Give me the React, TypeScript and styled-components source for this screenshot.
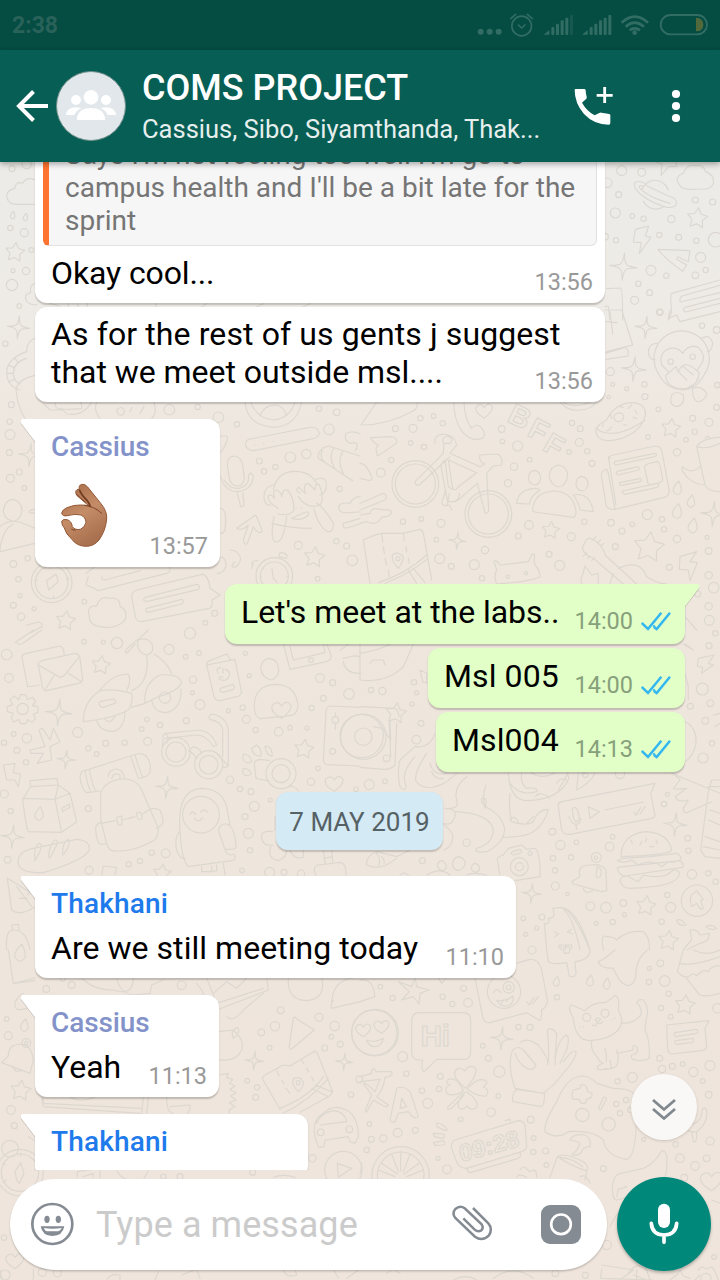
import React from "react";
import styled, { createGlobalStyle } from "styled-components";

const GlobalStyle = createGlobalStyle`
  * { box-sizing: border-box; }
  html, body { margin: 0; padding: 0; }
  body { font-family: Roboto, "Liberation Sans", sans-serif; background: #efe6dd; }
`;

const Screen = styled.div`
  position: relative;
  display: flex;
  flex-direction: column;
  width: 720px;
  height: 1280px;
  overflow: hidden;
  background: linear-gradient(180deg, #ecebe7 0, #ecebe7 170px, #eeebe6 300px, #efe6dd 470px, #eee5dc 900px, #efe5dc 1280px);
`;

const Wallpaper = styled.svg`
  position: absolute;
  inset: 0;
  width: 720px;
  height: 1280px;
  fill: none;
  stroke: #dcd8d1;
  stroke-width: 3.5;
  stroke-linejoin: round;
  stroke-linecap: round;
`;

const StatusBar = styled.div`
  position: relative;
  z-index: 2;
  display: flex;
  justify-content: space-between;
  flex: none;
  height: 50px;
  padding-left: 12px;
  background: #054c43;
`;

const Clock = styled.span`
  font-size: 23px;
  font-weight: 700;
  line-height: 52px;
  color: #296259;
`;

const Header = styled.header`
  position: relative;
  z-index: 2;
  display: flex;
  align-items: center;
  flex: none;
  height: 112px;
  padding-left: 16px;
  background: #075e54;
  box-shadow: 0 2px 6px rgba(0, 0, 0, 0.35);
`;

const Avatar = styled.div`
  width: 70px;
  height: 70px;
  margin-left: 8px;
  border-radius: 50%;
  border: 1px solid #6f8f8b;
  background: #e1e7ea;
  svg { display: block; }
`;

const Heading = styled.div`
  width: 432px;
  margin-left: 16px;
  white-space: nowrap;
`;

const Title = styled.div`
  font-size: 36px;
  font-weight: 500;
  line-height: 42px;
  color: #fff;
`;

const Subtitle = styled.div`
  margin-top: 4px;
  font-size: 25.5px;
  line-height: 32px;
  color: #e6efee;
`;

const HeaderIcons = styled.div`
  display: flex;
  align-items: center;
  gap: 56px;
`;

const Chat = styled.main`
  position: relative;
  display: flex;
  flex-direction: column;
  flex: none;
  height: 1008px;
  padding: 0 35px;
  overflow: hidden;
`;

const Bubble = styled.section<{ $w: number; $gap: number; $sent?: boolean; $tail?: boolean }>`
  position: relative;
  flex: none;
  align-self: ${(p) => (p.$sent ? "flex-end" : "flex-start")};
  width: ${(p) => p.$w}px;
  margin-top: ${(p) => p.$gap}px;
  border-radius: 12px;
  border-top-left-radius: ${(p) => (p.$tail && !p.$sent ? 0 : 12)}px;
  border-top-right-radius: ${(p) => (p.$tail && p.$sent ? 0 : 12)}px;
  background: ${(p) => (p.$sent ? "#e1ffc7" : "#fff")};
  box-shadow: 0 1.5px 1.5px rgba(0, 0, 0, 0.2);
`;

const TailShape = styled.svg<{ $sent?: boolean }>`
  position: absolute;
  top: 0;
  ${(p) => (p.$sent ? "right: -15px; transform: scaleX(-1);" : "left: -15px;")}
  filter: drop-shadow(0 1px 0.6px rgba(0, 0, 0, 0.2));
`;

const Sender = styled.div<{ $color: string; $track: number }>`
  padding: 11px 16px 0;
  font-size: 28px;
  font-weight: 500;
  line-height: 33px;
  letter-spacing: ${(p) => p.$track}px;
  color: ${(p) => p.$color};
`;

const Line = styled.div<{ $sent?: boolean; $top?: number }>`
  display: flex;
  align-items: flex-end;
  padding: ${(p) => p.$top ?? 8}px ${(p) => (p.$sent ? 14 : 12)}px ${(p) => (p.$sent ? 9 : 7)}px 16px;
`;

const Body = styled.div`
  flex: 1 1 0;
  min-width: 0;
  padding-bottom: 4px;
  font-size: 32px;
  line-height: 38px;
  color: #000;
  white-space: pre;
`;

const TextRow = styled.div<{ $track: number }>`
  letter-spacing: ${(p) => p.$track}px;
`;

const Meta = styled.div<{ $sent?: boolean }>`
  display: flex;
  align-items: center;
  gap: 8px;
  font-size: 23.5px;
  line-height: 28px;
  color: ${(p) => (p.$sent ? "#87a07b" : "#999")};
`;

const Emoji = styled.svg`
  display: block;
  width: 68px;
  height: 84px;
`;

const Quote = styled.blockquote`
  display: flex;
  align-items: flex-end;
  height: 108px;
  margin: 0 8px;
  padding: 0 0 8px 16px;
  border: 1px solid #e2e2e2;
  border-left: 6px solid #ff7430;
  border-radius: 6px;
  background: #f6f6f6;
  font-size: 28px;
  line-height: 33px;
  color: #757575;
  white-space: pre;
`;

const DateChip = styled.div`
  flex: none;
  align-self: center;
  width: 167px;
  height: 58px;
  margin: 20px 0 0 -1px;
  border-radius: 12px;
  background: #d4eaf4;
  box-shadow: 0 1.5px 1.5px rgba(0, 0, 0, 0.18);
  font-size: 26px;
  line-height: 60px;
  text-align: center;
  color: #566166;
  white-space: nowrap;
`;

const ScrollButton = styled.button`
  position: absolute;
  right: 23px;
  bottom: 30px;
  width: 66px;
  height: 66px;
  padding: 0;
  border: 0;
  border-radius: 50%;
  background: rgba(251, 250, 249, 0.92);
  box-shadow: 0 1px 3px rgba(0, 0, 0, 0.16);
  svg { display: block; }
`;

const Footer = styled.footer`
  position: relative;
  display: flex;
  align-items: center;
  flex: none;
  height: 110px;
  padding: 0 9px 2px 10px;
  gap: 10px;
`;

const InputBar = styled.div`
  display: flex;
  align-items: center;
  width: 597px;
  height: 91px;
  padding-left: 20px;
  border-radius: 46px;
  background: #fff;
  box-shadow: 0 1.5px 2px rgba(0, 0, 0, 0.2);
  svg { flex: none; }
`;

const Placeholder = styled.span`
  width: 355px;
  margin-left: 22px;
  padding-top: 2px;
  font-size: 36px;
  line-height: 44px;
  letter-spacing: 0.08px;
  color: #cbcbcb;
  white-space: nowrap;
`;

const Attachments = styled.div`
  display: flex;
  align-items: center;
  gap: 46px;
`;

const MicButton = styled.button`
  width: 94px;
  height: 94px;
  padding: 0;
  border: 0;
  border-radius: 50%;
  background: #00897b;
  box-shadow: 0 2px 3px rgba(0, 0, 0, 0.25);
  svg { display: block; }
`;

/* ---------- wallpaper primitives ---------- */

type N3 = [number, number, number];

const polar = (x: number, y: number, r: number, a: number) =>
  `${(x + r * Math.cos(a)).toFixed(1)} ${(y + r * Math.sin(a)).toFixed(1)}`;

const starPath = ([x, y, r]: N3) =>
  "M" +
  Array.from({ length: 10 }, (_, i) =>
    polar(x, y, i % 2 ? r * 0.52 : r, -1.45 + (i * Math.PI) / 5)
  ).join("L") +
  "Z";

const sparkPath = ([x, y, r]: N3) =>
  Array.from({ length: 4 }, (_, i) => {
    const a = -1.48 + (i * Math.PI) / 2;
    return `${i ? "" : "M" + polar(x, y, r, a)}Q${polar(x, y, r * 0.2, a + 0.4)} ${polar(x, y, r * 0.32, a + Math.PI / 4)}Q${polar(x, y, r * 0.2, a + 1.17)} ${polar(x, y, r, a + Math.PI / 2)}`;
  }).join("") + "Z";

const dropPath = ([x, y, r]: N3) =>
  `M${x + r * 0.2} ${y - r}Q${x - r * 0.8} ${y} ${x - r * 0.5} ${y + r * 0.5}Q${x} ${y + r * 1.2} ${x + r * 0.5} ${y + r * 0.5}Q${x + r * 0.7} ${y} ${x + r * 0.2} ${y - r}Z`;

const heartPath = ([x, y, r]: N3) =>
  `M${x} ${y + r}Q${x - r * 1.3} ${y + r * 0.3} ${x - r} ${y - r * 0.4}Q${x - r * 0.4} ${y - r} ${x} ${y - r * 0.3}Q${x + r * 0.5} ${y - r * 1.1} ${x + r} ${y - r * 0.4}Q${x + r * 1.1} ${y + r * 0.2} ${x} ${y + r}Z`;

interface PatchProps {
  x: number;
  y: number;
  dots: number[];
  stars?: N3[];
  sparks?: N3[];
  drops?: N3[];
  hearts?: N3[];
  rings?: N3[];
  d?: string;
  children?: React.ReactNode;
}

function Patch({ x, y, dots, stars = [], sparks = [], drops = [], hearts = [], rings = [], d = "", children }: PatchProps) {
  const circles: N3[] = [...rings];
  for (let i = 0; i < dots.length; i += 3) circles.push([dots[i], dots[i + 1], dots[i + 2]]);
  return (
    <g transform={`translate(${x} ${y}) scale(.33333)`}>
      {circles.map(([cx, cy, r], i) => (
        <circle key={i} cx={cx} cy={cy} r={r} />
      ))}
      <path d={[...stars.map(starPath), ...sparks.map(sparkPath), ...drops.map(dropPath), ...hearts.map(heartPath), d].join("")} />
      {children}
    </g>
  );
}

function Doodles() {
  return (
    <Wallpaper viewBox="0 0 720 1280">
      <Patch x={0} y={0}
        dots={[36,506,9,80,492,14,31,684,8,73,698,12,94,750,7,39,812,6,78,813,11,36,855,17,58,918,7]}
        stars={[[45,757,30]]} drops={[[38,646,12],[76,652,12]]}
        d="M105 540Q80 528 68 550Q48 542 44 566Q20 570 20 590Q24 614 52 613L105 613M110 850Q88 850 92 878Q72 882 78 900Q86 916 110 914M150 911L180 918M205 911V920M232 911L236 920M262 911V920M470 911L466 920M620 911L605 920M790 911L770 920M930 911L910 920" />
      <Patch x={360} y={0}
        dots={[785,512,15,845,517,12,742,548,14,776,584,9,1006,600,9,1058,606,9,766,639,15,817,648,7,851,656,8,934,657,11,898,705,8,956,712,9,1009,722,8,768,721,8,735,710,10,1067,719,22,1022,772,15,873,811,15,919,827,8,1006,826,10,1037,810,8,835,851,8,869,878,9,824,901,12,900,937,9]}
        stars={[[1012,655,32]]} sparks={[[790,800,41]]}
        d="M826 688L866 678L856 708L873 712L838 760L844 728L820 726ZM888 486L906 492L903 526L926 500L950 500L948 486M958 553Q940 532 970 520Q980 490 1008 497Q1030 492 1036 514Q1064 524 1060 550Q1054 566 1036 567L985 568Q962 566 958 553ZM845 570A42 42 0 0 1 925 570M850 604A42 42 0 0 0 908 622M826 546Q848 540 862 558L925 588Q948 592 950 610Q946 625 920 622Q850 600 826 565Q820 552 826 546ZM850 560Q838 552 838 562Q860 590 930 610M893 748L990 752L985 785L953 770L950 778L980 795L968 814Q920 780 893 748ZM1080 840L935 880Q930 884 935 935L925 960M1080 856L966 888Q955 896 962 906L1080 878M1080 895L975 922Q965 930 976 936L1080 910M740 866L782 864Q788 866 788 960M735 920L745 918L750 960" />
      <Patch x={0} y={310}
        dots={[16,101,8,34,284,9,29,335,8,30,374,15,28,428,9,58,486,9,31,505,12,73,534,7,83,745,8,40,762,10,55,808,8,60,857,6,40,886,9,63,920,11,102,896,6,253,875,7,508,299,16,593,291,8,655,322,16,711,343,8,957,296,8,1010,307,10,987,358,16,778,453,9,792,484,8,826,471,8,871,442,16,919,432,14,1019,537,8,895,706,12,1009,694,8,1040,708,9,1057,751,16,953,806,7,644,910,9,616,938,7]}
        sparks={[[55,52,34],[90,435,35]]} stars={[[943,742,32],[197,932,30]]}
        rings={[[155,817,61],[155,817,49],[823,798,55],[823,798,42]]}
        d="M105 85Q80 95 80 125M80 125Q20 145 20 190Q22 230 60 240M80 145Q42 155 40 190Q42 215 60 222M24 165L42 172M20 190H40M27 215L45 207M45 145L54 158M105 196Q60 205 48 235Q50 285 75 326M130 280L150 300H190L200 312Q250 320 275 276M165 278Q165 300 185 296Q190 300 245 296Q246 280 240 276M290 276Q280 300 300 326M350 300Q365 285 372 300Q376 320 355 314ZM390 305L396 292M420 310L432 290M462 276Q472 310 455 326
        M735 276Q740 345 820 352Q890 350 905 276M752 276Q770 325 820 330Q870 325 885 276M780 318Q790 285 830 285Q850 290 860 315M660 380Q690 370 680 395Q670 420 660 428M745 388L930 352Q955 350 958 370Q955 382 940 386L760 422Q738 420 736 402Q738 392 745 388ZM764 405h1M790 400h1M820 395h1M847 390h1M1080 438L985 408Q950 420 955 445L1058 512M970 412Q955 440 975 458M1000 416Q985 445 1004 474M1028 425Q1010 455 1030 490M1080 372Q1060 360 1038 370Q1030 390 1050 400Q1062 396 1070 400Q1075 412 1065 422
        M682 465Q680 440 704 438Q724 442 728 465L733 505Q730 528 710 528Q692 524 688 505ZM662 498Q672 545 715 545Q758 538 760 498Q750 480 745 500Q750 525 718 535Q690 538 672 510M712 550L722 590Q733 592 732 580L728 548
        M820 540Q830 485 885 484Q930 484 950 520M820 525Q790 530 792 565Q796 588 812 585M948 508Q985 495 978 535Q975 550 960 555M835 595Q800 575 805 558Q812 550 824 565Q815 540 830 540Q845 548 845 560Q848 535 862 540Q882 560 882 600Q870 620 835 612M900 550Q882 540 896 532L916 550Q908 520 925 520L945 540Q945 515 958 525Q975 570 960 585Q920 600 895 560M822 620Q810 690 825 695Q850 705 860 620M950 580Q970 590 1000 640Q1002 670 980 664Q950 640 942 595M875 625Q905 635 925 615Q930 600 908 610L875 625ZM815 640Q870 655 935 655M888 595h1M902 593h1
        M710 655L767 615Q775 630 787 665Q775 675 760 650L742 700Q732 708 730 690L745 645Q725 665 710 655ZM757 765Q750 752 773 752M755 775L760 760M836 740L840 728Q860 728 862 740M860 745L836 740M816 775L820 805L832 818M790 775h1M783 800h1M860 800h1M1080 560Q1060 560 1050 580Q1015 575 1016 595Q1020 610 1045 608L1080 606M1080 625L1030 640Q1026 655 1040 654L1080 642
        M37 568Q66 572 66 605Q60 632 38 634Q12 628 10 602Q14 572 37 568ZM0 650Q20 630 60 636L105 655M0 722Q5 660 40 642M0 725L105 700M105 598Q85 600 88 608L105 610M146 840L140 812L168 792L175 815ZM150 775L152 765M112 810L104 811M200 808L207 806M160 858L162 866
        M258 790L285 770M265 800L258 825L285 836L295 842L500 790Q515 785 508 772M308 798Q300 810 315 810L420 782M395 860Q395 845 410 840L605 793Q625 792 630 835L660 855L636 870Q640 890 628 895L425 935Q408 935 405 915ZM435 862L590 823Q602 825 596 838L440 875Q425 872 435 862ZM440 895L545 868Q555 872 545 882L445 907Q432 905 440 895ZM268 920Q258 885 290 888Q300 855 330 865Q360 860 360 890Q385 900 375 930Q350 960 300 950Q268 945 268 920ZM662 595Q682 595 675 660Q670 672 662 670M690 720Q715 720 722 745Q718 770 700 772Q690 770 705 755M655 740Q680 740 678 770Q670 790 652 790M80 945L115 936Q130 940 125 950L90 970" />
      <Patch x={360} y={310}
        dots={[899,6,9,1026,47,8,1070,60,10,751,185,12,758,223,6,800,236,6,853,223,8,855,260,9,746,262,5,1072,225,8,1070,292,9,895,298,7,998,325,9,1047,337,12,1004,365,8,978,389,7,864,381,7,951,427,11,181,325,8,221,318,7,248,340,8,106,356,9,159,355,12,152,399,7,192,411,8,94,450,8,62,488,13,425,357,10,427,394,7,473,408,15,636,339,8,661,356,9,658,397,12,627,426,7,682,424,8,696,460,9,509,449,7,462,470,11,444,520,11,129,635,8,184,627,7,243,640,12,507,645,13,475,678,9,634,680,12,673,635,8,753,638,10,786,663,9,817,643,7,862,614,15,906,628,8,912,658,8,951,687,11,1041,682,6,1046,723,10,766,710,9,229,689,7,375,720,11,239,746,15,274,769,9,343,764,15,366,805,8,567,733,9,599,766,15,928,772,9,1046,796,11,1061,833,16,1046,889,11,1048,931,15,1013,852,9,932,155,8,998,140,8,114,746,6,443,800,5,498,790,5]}
        sparks={[[858,52,33],[822,177,37],[1060,612,38],[292,692,26]]}
        stars={[[933,355,30],[867,712,47],[572,661,27]]}
        drops={[[952,535,22],[993,575,20],[951,605,24],[998,648,24]]}
        rings={[[166,522,70],[166,522,60],[385,612,70],[385,612,60]]} hearts={[[373,300,24]]}
        d="M895 190A83 83 0 1 1 1035 190Q1010 240 965 240Q915 235 895 190ZM890 100Q865 100 865 130Q870 150 888 150M1025 85Q1050 70 1058 100Q1055 125 1042 125M905 165Q895 125 930 115Q955 112 968 130Q985 102 1015 112Q1042 140 1022 165L1012 180M905 165L925 185M925 220Q910 195 925 190L948 170L955 185Q965 160 985 165Q1005 175 1018 188Q1015 225 980 235Q945 240 925 220ZM955 185L980 210M970 170L1000 195M935 255Q950 240 970 255Q975 285 950 290Q925 285 935 255ZM998 235Q1025 225 1040 250Q1035 275 1012 275Q995 265 998 235ZM930 0L925 25L950 15L960 35L1080 5M735 0L785 0L818 105L740 125M735 130L795 112Q808 120 804 138L738 148M750 5L758 72M738 35L772 38
        M5 345Q0 345 10 335L50 276M5 345Q80 345 155 305Q172 300 172 280M281 276Q285 370 340 388Q370 390 374 375Q370 350 350 345Q340 350 335 355Q315 330 312 280M32 383L90 380Q112 380 110 398Q90 415 52 438L48 415L55 405Q35 395 32 383ZM600 276Q625 305 660 300Q690 300 710 276M610 276Q640 298 690 276
        M165 515L250 430L252 400L270 400Q285 385 262 378Q245 380 250 400M165 515Q168 530 178 525L270 440M225 400Q220 375 250 372Q285 375 290 405L270 430L360 470L375 462Q355 455 360 435L412 432Q430 440 425 465L400 468L380 490L386 600Q385 612 375 608L352 520L295 570Q280 580 262 572L245 480Q240 460 255 450L265 530Q285 548 295 530L350 488L265 450L278 535M255 545L245 580Q250 590 268 585L275 600M268 550L262 585M298 550Q300 570 280 575
        M740 330Q765 280 815 278Q860 280 856 315Q845 365 785 385Q715 405 707 365Q712 342 740 330ZM707 355Q760 395 856 330M762 325Q760 310 780 308Q800 315 785 332Q768 340 762 325ZM750 310L755 325M730 340L728 350M755 350L748 358M800 345H790M825 300L830 310M830 325L820 322M780 290L790 292M815 285L805 295M750 360L740 362
        M750 445Q745 438 760 435L885 408Q903 408 906 425L928 545Q925 560 910 563L765 598Q742 600 738 585L724 495Q725 480 740 478L745 490L765 598M745 440L768 585M765 455L885 430Q895 432 885 440L768 465Q758 462 765 455ZM772 484L835 470Q842 475 835 480L775 495Q765 490 772 484ZM780 518L840 505Q850 510 840 515L785 526Q775 524 780 518ZM788 543L890 520Q902 525 892 532L795 553Q785 550 788 543ZM862 462L893 454Q900 455 908 510Q908 518 870 525Q862 522 862 510L853 470ZM1010 410Q1025 385 1080 382M1010 410Q1040 420 1080 400M1010 410L1035 525Q1045 545 1080 545M1020 470Q995 495 968 470Q960 480 985 505Q1010 525 1035 525M1035 385L1042 378L1050 383
        M523 481Q542 485 542 505Q538 525 523 525Q505 520 505 502Q508 483 523 481ZM596 465Q623 470 623 498Q618 528 596 531Q570 525 568 495Q572 468 596 465ZM665 499Q684 503 684 522Q680 542 665 543Q648 538 648 518Q652 500 665 499ZM470 580Q475 535 530 535L540 540Q510 560 508 582ZM518 603Q520 545 583 543Q640 545 648 605Q648 620 640 622L525 606ZM640 555Q690 545 700 605L660 600Q655 575 640 555ZM0 460Q20 460 35 500Q38 515 20 510L0 505M0 580L70 550Q85 555 75 570L0 600M0 615L30 610Q35 590 60 598L90 600Q100 610 85 618L65 622Q50 650 20 635L0 640
        M10 690Q40 675 65 670L130 670L180 658Q190 660 192 680L215 810M10 690L30 820M65 672L68 695M70 710L73 730M75 745L80 765M85 780L88 800M130 672L133 692M138 710L140 725M145 745L148 760M55 818Q140 790 200 735M75 820Q150 790 200 748M145 780L170 820M160 775L195 818M115 775Q92 750 98 735Q112 722 130 740Q130 755 115 775ZM410 822Q400 800 410 780L402 755Q405 745 420 765L505 755L515 735Q528 725 522 750L525 765Q540 780 540 800Q510 815 410 822
        M668 710L680 688Q692 678 720 705Q735 725 735 735L830 822M668 710Q665 730 700 745L790 822M700 690L707 680M713 698L722 690M722 708L732 700M670 738L680 728M683 745L690 738M695 752L705 742M775 775Q840 745 860 800Q890 820 920 822M750 820L760 790M665 820Q660 810 668 795L675 768L695 795L715 790V820M960 740L1010 725L990 755L1012 758L990 812L985 780L958 778ZM975 920L1010 960M975 890V960">
        <g fontFamily="Liberation Sans" fontWeight="700" fontSize="88">
          <text transform="translate(438 333) rotate(26)">B</text>
          <text transform="translate(498 374) rotate(28)">F</text>
          <text transform="translate(544 418) rotate(30)">F</text>
        </g>
      </Patch>
      <Patch x={0} y={630}
        dots={[252,35,7,310,36,6,351,39,17,20,74,16,27,144,13,507,58,15,557,80,7,597,69,7,570,10,17,579,149,11,577,188,6,600,224,15,736,70,6,748,137,6,685,242,6,728,233,8,739,268,12,767,300,8,836,305,13,870,293,7,921,294,6,970,205,9,935,234,8,960,144,13,998,158,9,1047,192,16,441,268,7,425,297,7,480,285,8,559,272,9,443,334,12,374,338,8,317,340,9,265,355,8,290,372,7,233,307,15,12,338,8,41,312,7,51,361,9,81,325,14,78,397,8,13,492,12,32,543,8,265,536,9,23,689,10,267,721,12,386,703,8,420,693,8,455,668,8,497,670,13,690,449,11,720,477,8,753,485,9,763,529,15,811,510,6,735,560,9,745,610,15,750,661,8,726,721,7,809,727,15,852,727,9,903,731,11,954,415,7,933,455,11,1068,478,7,933,90,7,998,364,9,1006,270,10]}
        stars={[[303,106,29],[912,358,30],[486,730,28]]}
        sparks={[[176,248,40],[198,388,28],[500,472,34],[38,620,35]]} drops={[[117,552,22]]}
        hearts={[[1003,458,26],[845,237,28]]}
        rings={[[68,237,17],[528,366,43],[528,366,30],[626,404,42],[626,404,28],[843,431,45],[843,431,27],[603,554,55],[495,203,17],[1090,320,68],[1090,320,26]]}
        d="M83 171L66 82Q66 74 75 71L180 48Q190 50 193 73M84 168Q85 172 118 165M114 100Q118 95 125 92L225 70Q238 72 240 85L248 150Q245 158 235 160L140 182Q130 182 127 170ZM115 105L180 142Q190 142 200 128L238 80M135 180L163 135M245 155L205 130M45 38L100 0M52 40Q60 48 75 35L125 0
        M57 209L61 194H77L82 209L98 202L107 215L97 227L114 230V247L100 252L106 266L96 277L83 269L78 281H62L56 268L42 276L33 264L40 250L22 245V230L38 224L30 208L42 198Z
        M250 265Q255 210 300 182Q340 175 395 190Q400 220 385 240Q340 265 250 275ZM298 182Q340 130 385 133Q395 150 380 182M300 215L340 207Q352 212 345 220L308 233Q292 225 300 215ZM290 272Q300 305 340 304Q375 295 375 243M315 268Q330 285 345 260M395 182Q440 165 442 100L440 75M435 220L395 232M435 220Q430 160 480 135Q540 130 545 160Q530 185 475 200ZM455 210Q460 245 495 248Q545 240 543 178M462 72Q500 95 515 130M415 30Q405 65 440 75Q465 70 455 40Q440 20 415 30ZM405 42L380 70Q370 65 385 52L435 10L445 0
        M117 300L128 295L150 330L160 295L180 335L150 350L155 390L112 400L130 370L92 370L90 360L135 350ZM10 405L45 400L40 428L62 432L55 470L45 450L20 450Z
        M620 105Q618 95 630 92L680 72L690 88L705 90L725 188L718 198L660 212Q645 212 642 200ZM620 105L705 88M655 130Q645 115 662 112M675 118Q690 120 688 138Q680 158 658 148Q655 138 668 142M670 128L668 115M662 175L698 163Q708 170 700 178L668 187Q655 182 662 175Z
        M808 85Q836 88 836 125Q830 148 812 150Q785 142 782 115Q785 88 808 85ZM763 235Q760 165 828 163Q890 165 894 230Q890 255 870 257L780 266Q765 262 763 235ZM850 42L870 118L980 95Q995 90 993 75L980 42M870 50L880 90L975 68L970 42M1020 62L1045 42M1030 85Q1080 70 1080 85M1030 95Q1035 130 1080 130
        M487 320L495 310L600 300Q640 310 650 345L640 350Q620 315 590 315L490 325L487 350M570 358L580 350Q600 355 605 370M565 362Q580 368 588 385M648 368L685 408Q665 420 668 405M685 408V300Q680 260 635 252Q622 260 630 268Q665 275 668 300V380M495 310Q510 320 500 340
        M68 508L92 470L90 452L170 445L175 465L210 490L230 575L185 607L85 605Q78 590 68 508ZM68 505L165 508L175 465L92 470M165 508L185 607M165 508L210 490M186 535L208 522L210 532L187 545Z
        M55 700Q50 665 100 655L230 628Q272 632 268 660Q255 690 130 728Q60 730 55 700ZM105 690Q100 650 118 640M118 640Q130 640 118 668Q100 700 105 690M145 682Q150 640 165 630Q180 632 165 655M165 655L150 685M188 672Q185 640 205 628M205 628Q215 640 190 675M22 745L35 840Q60 860 105 830M22 745L95 790M50 770L95 830M85 770V795M60 805H82M20 960Q15 900 40 900Q80 900 90 960M35 885L55 883L58 900M35 885L37 900
        M240 440L245 425L410 372Q440 365 450 400Q455 430 440 438L420 445M240 440Q245 480 260 488L300 483M255 420Q265 480 275 487M268 418Q280 480 290 484M392 378Q410 430 415 445M405 375Q425 440 430 443M302 570V490Q315 450 370 447Q410 445 425 480L475 595Q475 625 460 632Q400 665 350 663Q325 665 320 640ZM305 580L345 572M368 570L405 560M428 552L445 540M350 562L365 558L366 585Q350 590 350 562ZM410 548Q425 540 427 565Q412 578 410 548ZM325 440Q325 420 350 417Q370 420 374 445M335 445Q342 425 360 435V447M445 540Q460 530 480 540Q495 575 485 585L470 595M305 577Q285 580 287 600Q290 640 303 643L318 642
        M540 605Q530 480 603 475Q665 475 680 530L690 585M540 605Q545 690 565 710L695 692Q708 690 704 675M655 600Q660 580 680 582Q705 590 708 650Q710 660 675 658ZM675 658Q680 680 704 672M540 605Q522 620 530 660Q540 690 555 685M570 553Q575 540 588 553M602 547Q612 532 623 547M583 565Q595 582 608 563M605 710V725H635V708M635 712V725L650 722V705M670 700L675 735M310 708L350 712L345 735M310 708L305 735
        M770 345Q788 360 782 378Q760 380 755 355ZM795 350Q815 345 817 378Q800 380 795 350ZM730 372Q750 372 755 395Q735 405 728 385ZM730 415Q750 415 754 432Q735 445 727 425ZM808 392L780 388Q765 390 763 400L768 445L808 453M870 470Q880 465 895 482M990 228Q980 230 978 245L970 390Q972 402 980 404L1080 408M990 228L1080 232M1006 248V260M1006 280V298M825 560V600M818 605Q780 600 785 625Q790 650 820 645M812 650Q800 685 835 692Q860 685 860 655M870 660Q880 690 910 682L910 655M970 660L975 700M995 660L998 695M972 685L998 680M948 735Q935 710 955 705L1020 697Q1040 700 1038 735" />
      <Patch x={360} y={630}
        dots={[33,180,8,67,183,11,162,157,8,170,188,6,156,222,6,183,280,9,169,329,13,28,464,15,75,454,7,1047,47,9,1066,10,8,1027,177,18,991,229,9,1051,220,10,1036,272,10,1056,340,8,1029,384,15,780,432,14,922,493,6,912,522,8,320,638,11,187,692,9,577,605,10,601,645,14,649,637,7,749,650,13,758,620,7,983,625,9,985,662,8,579,685,8,633,682,8,585,721,8,586,768,12,622,792,5,996,733,14,1045,730,8,1067,755,8,691,829,13,738,833,16,790,819,10,793,854,6,758,876,8,709,880,6,922,795,8,932,832,15,905,875,8,490,865,7,546,861,9,530,894,6,497,913,6,677,436,7,510,670,6,708,683,5,80,385,10]}
        stars={[[108,250,32],[858,828,31],[925,932,31]]} sparks={[[515,790,30],[946,583,35]]}
        rings={[[1011,812,47],[478,710,27],[478,710,12],[709,682,15],[5,318,65]]}
        d="M0 42L0 150Q80 160 130 110L160 42M0 70Q60 60 90 42M30 100L38 90H70L75 105M0 230L105 235Q115 240 117 260M90 275L92 330L68 295L40 290M88 275L92 380M110 280L105 405Q90 420 70 418L0 412M180 120L200 130V160L188 155Z
        M975 42L1000 60L970 42M1015 85L1062 75L1045 100L1060 105L1025 130L1028 112L1012 108ZM975 130L985 170V210M1060 255L1080 250M1065 290L1080 280M975 275Q1010 290 1008 340Q1000 380 975 395
        M225 310Q210 355 165 350L120 390Q110 430 120 470Q140 490 138 465Q120 430 165 380M200 370Q160 430 168 455Q200 490 260 455L290 430M210 400Q220 440 260 430M215 425Q225 450 250 445M320 440Q280 470 290 510Q300 540 255 535M255 535Q290 535 285 560Q275 590 250 580M285 545Q390 550 400 600Q400 640 350 655Q340 670 380 665Q430 640 434 600Q430 560 385 535Q360 520 365 505Q385 500 375 535M375 535Q365 500 378 465M245 580Q270 595 278 615Q280 650 250 660M445 430Q450 510 500 512Q600 510 627 445L620 428M450 460Q480 500 530 485Q535 470 500 475Q480 460 485 430M450 490Q445 540 455 575Q500 590 520 575Q530 540 565 538Q555 580 520 605Q500 620 430 622M450 570Q465 550 478 582M500 580L520 560M515 428Q545 450 585 428M527 500Q540 480 570 505M625 428L595 480M590 460Q600 440 620 450M655 428L650 480Q690 460 705 430M665 435Q665 425 680 424
        M595 530Q592 520 605 515L885 460L872 492L885 555Q885 562 875 565L630 613Q608 615 604 595ZM638 545Q635 532 645 532Q655 535 658 565Q655 575 648 575Q640 572 638 545ZM627 560Q635 585 650 583Q662 580 662 565M648 585L650 598M685 530L718 545L690 565ZM735 540L850 516M822 546L828 556L842 532M840 552L855 530
        M935 430L1080 490M940 430L960 450L940 475Q940 480 980 475L945 500Q955 520 985 510L970 535Q970 550 980 548L1055 515M1045 485L1055 450H1080M1045 470H1080M1045 485L1022 660L1035 680L1080 685M1050 540L1080 550M1045 570L1080 585M1035 620L1080 635M1030 650L1080 660
        M783 680Q785 610 860 605Q925 610 935 660Q930 675 785 680ZM772 692L790 685L870 680L950 670Q968 680 960 690Q940 700 925 695L905 710L890 700Q860 690 835 705L815 690Q790 702 772 692ZM772 712L960 692Q972 700 968 712L795 738Q775 735 772 712ZM780 750Q782 742 800 738L835 755L850 735Q890 745 920 735L940 720Q965 720 955 740Q940 770 810 775Q785 775 780 750ZM813 630L817 640M840 645L845 635M860 625L856 635M888 630L892 640M870 650H882
        M412 690Q412 680 430 675L445 655L485 645L500 658L525 655Q540 660 541 740L465 752M412 690L420 735M458 665L480 658Q490 665 480 670L460 675Q448 670 458 665ZM690 705Q650 705 660 740L635 755L640 762L725 785L740 782L738 720Q725 700 690 705ZM712 710Q730 715 720 740Q710 750 708 735ZM670 775Q675 795 698 782M245 692Q262 700 258 715Q245 730 232 710Q232 695 245 692ZM295 680Q318 685 315 705Q295 735 278 710Q275 685 295 680ZM345 700Q362 705 358 720Q345 735 334 718Q335 700 345 700ZM200 735Q240 710 270 735M320 735Q340 725 380 735M120 735L130 728L145 735M20 705Q15 680 50 665L110 680L150 660M20 705Q60 725 110 685M50 670Q65 690 55 708M65 680Q75 690 72 700M1000 790L1010 782L1030 808L1022 812L1030 835L1022 838L1010 820L995 830Q985 800 1000 790Z
        M560 960L553 880Q570 885 565 865Q590 865 578 835L605 832Q640 840 690 960M605 832Q640 860 660 960M618 836Q660 860 690 960M582 905L596 912L584 920M635 898L622 905L637 912M597 955V945H635V955M603 945V960M617 945V960M730 960Q720 910 740 920Q760 920 770 930Q800 900 850 905Q870 920 868 960M950 870Q965 865 978 885Q955 890 950 870ZM1037 890Q1055 880 1070 895Q1055 905 1037 890ZM970 960Q980 945 995 930L990 900Q1010 895 1020 915L1048 910Q1050 935 1020 940L980 960" />
      <Patch x={0} y={950}
        dots={[139,117,10,188,87,7,215,105,10,545,106,13,20,207,7,25,257,12,33,480,13,43,527,9,842,181,10,825,229,14,784,247,10,809,293,7,957,202,12,1004,228,14,994,260,7,1021,283,9,974,294,9,742,392,7,771,412,8,767,442,9,1053,434,8,1078,388,10,937,625,11,758,667,9,540,680,9,490,680,8,12,863,8,15,975,15,127,967,12,172,969,12,895,398,6,962,547,10,1048,538,10,79,279,5]}
        sparks={[[763,332,28],[1033,335,26]]} stars={[[62,422,32]]} drops={[[73,227,20],[60,10,28]]} hearts={[[45,930,26]]}
        rings={[[79,279,13],[60,668,70],[60,668,56],[30,596,25],[1030,660,56],[1125,248,70]]}
        d="M25 0L40 100L105 92M40 100L105 84M45 170Q40 150 70 130M45 170Q50 185 80 175M245 84Q280 120 340 120Q400 140 400 84M350 84Q360 130 400 135L450 130L455 105L490 90M590 100L605 120Q620 160 650 180L805 120L800 84M620 84L650 160L790 115M640 130L680 95L710 115L740 84M680 200Q700 220 730 180L790 130M865 84Q860 150 920 152Q980 145 965 84M995 155Q1000 90 1060 84M995 175Q990 165 1000 150M995 175L1080 155
        M5 338L25 318Q25 280 65 283Q95 285 100 330L90 370ZM38 348Q45 372 68 360M658 245L700 240Q735 270 725 300Q710 335 658 330M700 265Q690 240 712 232Q725 245 700 265M880 203Q885 198 890 207L943 240L875 297Q868 300 868 290Z
        M788 388Q785 380 795 375L850 345L870 348L945 303L952 310L998 425Q995 435 985 440L900 487M788 388L840 478M830 362L838 378M845 390L852 402M858 415L870 430M905 330L912 343M920 355L926 365M935 380L940 392M840 475Q930 440 970 380M850 490Q930 450 985 385M935 415L985 440M945 405L995 425M895 425Q870 400 882 385Q900 378 910 395Q912 410 895 425ZM660 375L685 370L680 382L698 388L688 400L705 408L690 418L708 428L692 438L708 450L688 458L705 470L688 480V490M125 441L130 470L420 490M130 441V460L425 475M430 441L425 490M445 441L440 490M500 441Q500 490 520 490M510 470L570 465Q570 490 555 495M210 441Q240 460 285 441
        M945 560Q935 510 970 490Q1000 460 1040 480Q1075 500 1075 560L1065 580L1050 575L1045 560L975 570L972 590L955 592ZM950 520Q960 490 1000 482Q1035 485 1040 515L960 525M1012 640L1055 655L1015 682ZM50 690L45 665L62 638L72 670L58 700ZM8 640L18 645M62 610V618M10 698L18 690M112 660H105M232 680V665L300 655V682M250 680L280 670V680M350 662Q370 700 430 690L445 662M820 682Q850 670 885 682M85 560Q100 570 105 572M0 960L5 985M100 957V990M320 990Q330 970 360 975V990M465 990L475 965M545 975L590 957L600 985M850 960Q860 985 890 975L885 958M1000 957L1015 985M1040 985L1080 957" />
      <Patch x={360} y={950}
        dots={[61,110,7,98,144,8,248,140,8,311,115,9,277,162,8,324,158,13,516,0,12,591,142,8,475,231,8,510,232,9,368,287,7,385,325,9,128,320,15,418,365,17,139,371,8,241,379,9,237,417,8,186,422,8,203,460,15,415,438,7,393,487,13,302,508,7,512,509,10,28,522,7,34,568,9,70,565,11,113,548,13,166,541,9,20,600,8,234,625,6,261,658,13,521,564,7,520,606,8,557,603,9,559,645,7,730,656,9,868,55,6,901,40,10,867,96,8,914,93,16,926,131,8,903,174,8,932,200,7,1072,175,14,899,325,9,906,357,11,937,349,9,968,342,7,1000,366,14,1050,347,15,817,382,15,773,394,8,1028,393,7,1046,434,10,798,450,8,769,462,8,780,490,8,811,480,8,746,523,20,667,495,20,851,568,6,1050,573,12,960,625,13,1005,648,13,1040,625,10,947,583,8,973,683,10,740,885,14,1062,921,7,586,970,10,676,976,9,620,0,10,680,202,12,735,190,12,446,112,17]}
        stars={[[975,165,31]]} sparks={[[425,265,34]]} drops={[[589,95,16],[690,93,18],[740,102,18]]}
        hearts={[[65,228,22],[10,238,22],[1055,690,32]]}
        rings={[[432,125,50],[43,248,68],[122,676,86],[122,676,70],[1038,985,15],[446,112,7]]}
        d="M165 84L155 110L115 95L148 125L125 150L160 140L177 162L180 130L207 120L170 110ZM235 84L245 100L258 84M0 90Q40 84 45 140L0 155M345 84L368 200Q372 220 390 218L500 188L540 212Q545 205 545 180Q562 170 562 150L545 60Q535 25 510 28L468 40M400 128Q410 110 423 128M410 152Q440 155 458 138Q465 150 450 165Q425 175 410 152ZM425 160L430 150M440 155L445 145M500 155L508 165L522 142M518 162L535 140
        M175 188H310Q332 190 332 210V310Q330 328 312 328H230L192 365Q182 360 188 330H178Q155 328 155 308V210Q158 190 175 188ZM20 270Q45 280 70 265Q65 290 42 290Q25 288 20 270M565 35L560 0M565 35Q575 45 620 38L628 78Q640 85 648 72L645 35Q690 30 690 0M765 0Q730 30 715 35Q720 55 760 55Q780 105 805 107Q830 100 828 60Q835 20 862 0M970 0L952 65Q970 85 985 80Q1000 65 1010 78Q1030 55 1045 65Q1055 45 1080 48M980 85L1015 130Q1025 145 1080 130M960 40Q1000 50 1080 20M1000 0Q1040 20 1080 0
        M640 205Q620 170 635 165L675 182Q700 155 735 158Q750 150 765 136Q780 140 775 180Q795 215 775 240Q745 270 690 272Q645 270 640 205ZM660 232h1M670 230h1M755 210h1M765 205h1M705 210Q710 200 722 207L712 217ZM697 225Q705 232 712 218Q722 225 728 215M785 220Q830 220 845 190Q840 160 830 160Q835 145 850 150Q870 175 858 210L855 240Q870 270 868 325Q850 335 825 330M695 275Q690 300 715 325Q715 335 730 340Q710 345 712 357Q725 362 755 355L750 330M735 295Q742 320 738 335M770 300Q780 330 768 350Q750 360 735 355M770 310L820 300Q815 280 830 290Q840 310 815 315Q810 330 830 330M920 225L1047 212L1035 235L1040 290Q1038 300 1025 302L935 312Q925 310 923 295ZM945 248L1010 238Q1018 245 1010 250L947 260Q938 255 945 248ZM947 272L998 265Q1005 272 997 277L950 283Q940 278 947 272Z
        M465 415Q440 340 458 300Q475 285 490 300L528 345Q520 365 500 355Q475 340 465 310M480 278Q500 260 535 285Q570 330 562 345M562 345Q570 330 562 240Q575 230 590 250L585 345M585 320Q600 260 620 255Q630 262 620 300L600 340M610 335Q640 295 648 305Q650 320 630 345L585 400L550 430M470 418Q455 430 458 455L545 470Q555 460 553 430L470 418ZM465 415L550 430
        M316 415Q280 385 284 368Q292 345 314 362Q330 340 347 355Q352 380 316 415ZM310 422Q290 375 262 390Q255 400 270 405Q250 412 262 432Q285 440 310 422ZM322 418Q350 380 378 392Q385 402 370 410Q392 420 378 438Q350 440 322 418ZM318 425Q285 455 298 475Q310 482 320 468Q335 485 350 472Q358 450 318 425ZM308 428L262 472Q265 482 275 475L312 435
        M0 380L35 370V360Q42 350 48 365L95 365Q100 380 75 382Q70 420 50 440L85 465Q80 475 65 465L40 450L20 485Q15 490 18 475L35 435L10 400Q15 395 45 425L60 388L0 395
        M90 510L110 415Q130 405 150 425L175 500Q160 510 145 485L115 490L105 515Q95 520 90 510ZM125 445L120 475L140 470ZM230 520Q240 515 262 538Q258 548 230 528ZM220 550L250 552Q258 560 248 565L222 560ZM220 578L250 572Q260 580 250 585L225 586Z
        M590 455Q620 380 665 378Q690 378 710 400L760 415Q820 415 825 440M590 455Q550 520 555 545Q590 570 625 545Q700 540 730 570Q740 620 800 628Q835 620 828 440M640 420L660 415L663 405Q680 400 683 425L695 430Q700 445 680 447L678 458Q660 465 658 448L640 448Q632 440 640 420ZM730 442Q740 440 738 450L722 480Q712 478 718 470ZM940 500Q970 550 1010 545Q1045 520 1040 480Q1030 465 1025 485Q1025 520 985 525M995 545L1000 575Q1012 580 1010 545
        M275 595Q272 575 285 570L475 512Q490 512 495 525L500 590Q498 600 485 605L320 655Q300 655 292 640ZM322 655Q320 665 330 668L475 625Q485 620 480 608M435 512L450 508V515M630 570Q640 550 675 555Q695 565 690 590Q670 590 665 605Q655 620 635 615Q655 600 660 580Q650 572 630 570ZM592 620Q610 605 670 635Q690 650 678 662Q640 650 592 620ZM592 620L570 682M680 662L675 690M600 622Q640 625 668 650M660 680Q680 670 690 700M480 660Q490 640 508 665Q530 650 530 682M470 680Q480 670 500 682
        M122 605V662M95 612L115 665M150 612L130 665M65 640L112 672M178 640L132 672M55 660L105 680M190 660L140 680M5 640Q5 660 0 672M760 740Q750 690 775 672L850 655Q885 640 905 602Q925 600 920 650Q920 700 880 720L770 750Q762 750 760 740ZM770 740L775 718L800 710M750 830Q770 790 782 780M725 957L722 985L880 990M725 945L820 960L780 990M1055 750L1080 760M805 970Q830 930 860 960L870 990M830 960V990M820 975L860 990M930 990L950 975L960 960L970 978L990 985M1015 960L1025 950L1040 957L1055 950L1065 965L1075 990M1005 990L1020 975M80 970L100 957L120 970M280 990Q320 970 350 990M400 985Q460 940 520 985">
        <text x="182" y="288" fontFamily="Liberation Sans" fontWeight="700" fontSize="88">Hi</text>
        <text transform="translate(303 636) rotate(-15) skewX(-4)" fontFamily="Liberation Sans" fontWeight="700" fontSize="72" strokeDasharray="16 5">09:28</text>
      </Patch>
    </Wallpaper>
  );
}

/* ---------- icons ---------- */

function StatusIcons() {
  const bars = (x: number, dimLast: boolean) =>
    [14, 24, 34, 44, 52, 60].map((h, i) =>
      i === 0 ? (
        <path key={i} d={`M${x} 104L${x + 17} 90V104Z`} />
      ) : (
        <rect key={i} x={x + 9 + i * 14} y={105 - h} width="9" height={h} rx="3" opacity={dimLast && i === 5 ? 0.4 : 1} />
      )
    );
  return (
    <svg width="250" height="50" viewBox="0 0 750 150" fill="#326d64">
      <circle cx="32" cy="95" r="9" /><circle cx="59" cy="95" r="9" /><circle cx="86" cy="95" r="9" />
      <g fill="none" stroke="#326d64" strokeWidth="5" strokeLinecap="round">
        <circle cx="155" cy="78" r="29.5" />
        <path d="M145 75L155 84L165 75M122 56L137 43M172 43L187 56" />
      </g>
      {bars(221, true)}
      {bars(336, false)}
      <g fill="none" stroke="#326d64" strokeWidth="8">
        <path d="M455 68Q494 32 534 68M467 80Q494 56 522 80M479 91Q494 79 510 91" />
      </g>
      <circle cx="494" cy="98" r="7" />
      <rect x="572" y="45" width="139" height="58" rx="29" fill="none" stroke="#326d64" strokeWidth="5.5" />
      <path d="M678 53Q700 54 700 74Q700 93 678 94Z" fill="#52693c" />
    </svg>
  );
}

const BackIcon = () => (
  <svg width="32" height="34" viewBox="0 0 32 34" fill="none" stroke="#fff" strokeWidth="4">
    <path d="M17.5 2.5L3 17L17.5 31.5M3 17H32" />
  </svg>
);

const GroupIcon = () => (
  <svg width="68" height="68" viewBox="0 0 204 204" fill="#fff">
    <circle cx="102" cy="76" r="22" />
    <circle cx="57" cy="84" r="15" /><circle cx="147" cy="84" r="15" />
    <path d="M60 144V136Q66 108 102 108Q138 108 144 136V144ZM27 129Q29 107 58 106Q66 106 73 109Q57 116 52 129ZM177 129Q175 107 146 106Q138 106 131 109Q147 116 152 129Z" />
  </svg>
);

const CallIcon = () => (
  <svg width="40" height="40" viewBox="0 0 120 120" fill="#fff">
    <path d="M2 12Q2 9 5 9H31Q34 9 35 13Q35 23 38 32Q39 35 37 38L24 50Q38 75 62 88L76 81Q79 79 82 80L106 84Q109 85 109 88V111Q109 116 104 116Q60 116 30 84Q2 52 2 12Z" />
    <path d="M92 3V51M68 28H116" stroke="#fff" strokeWidth="8.5" />
  </svg>
);

const MenuIcon = () => (
  <svg width="12" height="34" viewBox="0 0 12 34" fill="#fff">
    <circle cx="6" cy="5" r="4.1" /><circle cx="6" cy="17" r="4.1" /><circle cx="6" cy="29" r="4.1" />
  </svg>
);

const Ticks = () => (
  <svg width="30" height="20" viewBox="0 0 90 60" fill="none" stroke="#34b7f1" strokeWidth="7.5">
    <path d="M2 36L21 54L61 5M38 48L47 54L87 5M38 48L41 43" />
  </svg>
);

const OkHand = () => (
  <Emoji viewBox="36 4 204 252">
    <defs>
      <linearGradient id="skin" x1="0" y1="0" x2=".45" y2="1">
        <stop offset="0" stopColor="#a56b46" />
        <stop offset=".55" stopColor="#c58c68" />
        <stop offset="1" stopColor="#a9714f" />
      </linearGradient>
    </defs>
    <path fill="url(#skin)" stroke="#935734" strokeWidth="3" d="M128 41Q138 39 146 49L186 99Q205 122 203 145Q200 180 180 208Q165 227 140 227Q112 226 98 205Q80 190 76 172Q68 165 68 152Q72 144 84 147Q98 151 100 168Q108 179 124 176Q138 170 141 155Q140 140 126 133Q110 128 85 135Q70 138 68 127Q70 117 84 111Q105 102 125 103Q140 103 150 106L113 74Q107 62 114 57Q118 55 121 57Q118 44 128 41Z" />
    <path fill="none" stroke="#6f3b20" strokeWidth="5" strokeLinecap="round" d="M122 59Q128 74 145 90Q152 100 154 108" />
    <path fill="none" stroke="#7d472a" strokeWidth="3" strokeLinecap="round" d="M137 104Q165 106 188 128M114 72Q126 84 140 95M98 176Q102 180 110 178" />
  </Emoji>
);

const ChevronsIcon = () => (
  <svg width="66" height="66" viewBox="0 0 66 66" fill="none" stroke="#82898e" strokeWidth="2.8">
    <path d="M22 26L33 35.5L44 26M22 35L33 44.5L44 35" />
  </svg>
);

const SmileIcon = () => (
  <svg width="44" height="44" viewBox="0 0 132 132" fill="#858b92">
    <circle cx="67" cy="66" r="60" fill="none" stroke="#858b92" strokeWidth="8" />
    <ellipse cx="51" cy="52" rx="8" ry="11" /><ellipse cx="85" cy="52" rx="8" ry="11" />
    <path fillRule="evenodd" d="M32 73H103Q98 102 67 102Q37 102 32 73ZM42 78Q45 88 51 88H85Q91 87 95 78Q67 83 42 78Z" />
  </svg>
);

const ClipIcon = () => (
  <svg width="44" height="40" viewBox="0 0 132 120" fill="none" stroke="#858b92" strokeWidth="7.5" strokeLinecap="butt">
    <path d="M66 12L112 58Q126 74 114 94Q94 114 72 98L13 42Q2 28 13 15Q27 3 41 13L92 61Q99 72 90 80Q80 85 71 77L37 43" />
  </svg>
);

const CameraIcon = () => (
  <svg width="40" height="39" viewBox="0 0 120 117">
    <rect width="120" height="117" rx="27" fill="#858b92" />
    <circle cx="60" cy="58" r="29.5" fill="none" stroke="#fff" strokeWidth="8" />
  </svg>
);

const MicIcon = () => (
  <svg width="94" height="94" viewBox="0 0 282 282" fill="none" stroke="#fff" strokeWidth="11" strokeLinecap="round">
    <rect x="123" y="80" width="36" height="73" rx="18" fill="#fff" stroke="none" />
    <path d="M103 139Q105 173 141 174Q177 173 179 139M141 175V196" />
  </svg>
);

function Tail({ sent }: { sent?: boolean }) {
  return (
    <TailShape $sent={sent} width="15" height="24" viewBox="0 0 15 24">
      <path fill={sent ? "#e1ffc7" : "#fff"} d="M15 0H2.5Q0 .5 1 4L15 22.5Z" />
    </TailShape>
  );
}

interface TextLine {
  text: string;
  track?: number;
}

interface MessageProps {
  lines?: TextLine[];
  time?: string;
  width: number;
  gap: number;
  sent?: boolean;
  tail?: boolean;
  sender?: { name: string; color: string; track: number };
  quote?: string;
  children?: React.ReactNode;
}

function Message({ lines = [], time, width, gap, sent, tail, sender, quote, children }: MessageProps) {
  return (
    <Bubble $w={width} $gap={gap} $sent={sent} $tail={tail}>
      {tail && <Tail sent={sent} />}
      {quote && <Quote>{quote}</Quote>}
      {sender && <Sender $color={sender.color} $track={sender.track}>{sender.name}</Sender>}
      <Line $sent={sent} $top={sender || sent ? 9 : 8}>
        <Body>
          {children}
          {lines.map((l) => (
            <TextRow key={l.text} $track={l.track ?? 0}>{l.text}</TextRow>
          ))}
        </Body>
        {time && (
          <Meta $sent={sent}>
            {time}
            {sent && <Ticks />}
          </Meta>
        )}
      </Line>
    </Bubble>
  );
}

const CASSIUS = { name: "Cassius", color: "#8393ca", track: -0.12 };
const THAKHANI = { name: "Thakhani", color: "#1f7aec", track: 0.18 };

export default function App() {
  return (
    <Screen>
      <GlobalStyle />
      <Doodles />
      <StatusBar>
        <Clock>2:38</Clock>
        <StatusIcons />
      </StatusBar>
      <Header>
        <BackIcon />
        <Avatar><GroupIcon /></Avatar>
        <Heading>
          <Title>COMS PROJECT</Title>
          <Subtitle>Cassius, Sibo, Siyamthanda, Thak...</Subtitle>
        </Heading>
        <HeaderIcons>
          <CallIcon />
          <MenuIcon />
        </HeaderIcons>
      </Header>
      <Chat>
        <Message width={570} gap={-24} time="13:56" lines={[{ text: "Okay cool...", track: -0.12 }]}
          quote={"Says I'm not feeling too well I'm go to\ncampus health and I'll be a bit late for the\nsprint"} />
        <Message width={570} gap={4} time="13:56"
          lines={[
            { text: "As for the rest of us gents j suggest", track: 0.11 },
            { text: "that we meet outside msl....", track: -0.04 },
          ]} />
        <Message width={185} gap={17} tail sender={CASSIUS} time="13:57"><OkHand /></Message>
        <Message width={460} gap={17} sent tail time="14:00" lines={[{ text: "Let's meet at the labs..", track: -0.04 }]} />
        <Message width={257} gap={4} sent time="14:00" lines={[{ text: "Msl 005", track: 0.1 }]} />
        <Message width={249} gap={4} sent time="14:13" lines={[{ text: "Msl004", track: 0.1 }]} />
        <DateChip>7 MAY 2019</DateChip>
        <Message width={481} gap={26} tail sender={THAKHANI} time="11:10" lines={[{ text: "Are we still meeting today", track: 0.04 }]} />
        <Message width={184} gap={17} tail sender={CASSIUS} time="11:13" lines={[{ text: "Yeah" }]} />
        <Message width={273} gap={17} tail sender={THAKHANI} />
        <ScrollButton><ChevronsIcon /></ScrollButton>
      </Chat>
      <Footer>
        <InputBar>
          <SmileIcon />
          <Placeholder>Type a message</Placeholder>
          <Attachments>
            <ClipIcon />
            <CameraIcon />
          </Attachments>
        </InputBar>
        <MicButton><MicIcon /></MicButton>
      </Footer>
    </Screen>
  );
}
